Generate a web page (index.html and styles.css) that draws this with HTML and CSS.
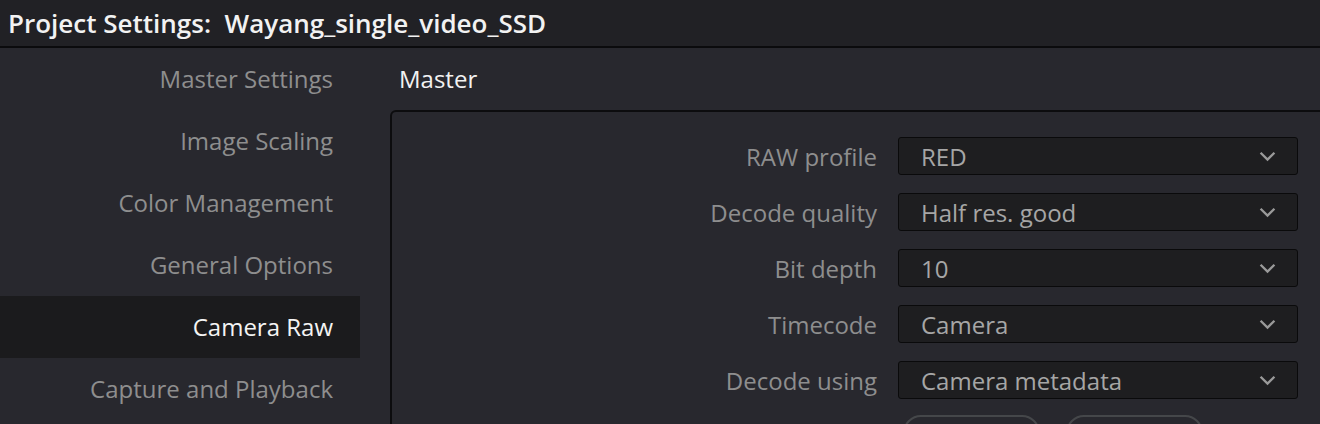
FILE: index.html
```html
<!DOCTYPE html>
<html lang="en">
<head>
    <meta charset="UTF-8" />
    <title>Project Settings</title>
    <link rel="stylesheet" href="styles.css">
</head>
<body>
    <div class="topbar">
        <span class="topbar-title">Project Settings:&nbsp; Wayang_single_video_SSD</span>
    </div>

    <div class="layout">
        <div class="sidebar">
            <div class="side-item">Master Settings</div>
            <div class="side-item">Image Scaling</div>
            <div class="side-item">Color Management</div>
            <div class="side-item">General Options</div>
            <div class="side-item active">Camera Raw</div>
            <div class="side-item">Capture and Playback</div>
        </div>

        <div class="main">
            <div class="main-title">Master</div>
            <div class="panel">
                <div class="row">
                    <span class="row-label">RAW profile</span>
                    <div class="select"><span>RED</span><svg class="chev" viewBox="0 0 16 10"><path d="M1.5 1.5 L8 8 L14.5 1.5" /></svg></div>
                </div>
                <div class="row">
                    <span class="row-label">Decode quality</span>
                    <div class="select"><span>Half res. good</span><svg class="chev" viewBox="0 0 16 10"><path d="M1.5 1.5 L8 8 L14.5 1.5" /></svg></div>
                </div>
                <div class="row">
                    <span class="row-label">Bit depth</span>
                    <div class="select"><span>10</span><svg class="chev" viewBox="0 0 16 10"><path d="M1.5 1.5 L8 8 L14.5 1.5" /></svg></div>
                </div>
                <div class="row">
                    <span class="row-label">Timecode</span>
                    <div class="select"><span>Camera</span><svg class="chev" viewBox="0 0 16 10"><path d="M1.5 1.5 L8 8 L14.5 1.5" /></svg></div>
                </div>
                <div class="row">
                    <span class="row-label">Decode using</span>
                    <div class="select"><span>Camera metadata</span><svg class="chev" viewBox="0 0 16 10"><path d="M1.5 1.5 L8 8 L14.5 1.5" /></svg></div>
                </div>
                <div class="buttons">
                    <button class="pill-btn" title="Apply"></button>
                    <button class="pill-btn" title="Reset"></button>
                </div>
            </div>
        </div>
    </div>
</body>
</html>
```

FILE: styles.css
```css
html, body {
    margin: 0;
    padding: 0;
    height: 100%;
    overflow: hidden;
}

body {
    background: #28282e;
    font-family: "Open Sans", "Noto Sans", sans-serif;
    color: #8e8e8e;
}

.topbar {
    height: 46px;
    display: flex;
    align-items: center;
    padding-left: 8px;
    background: #212125;
    border-bottom: 2px solid #0b0b0d;
}

.topbar-title {
    color: #f2f2f2;
    font-size: 26px;
    font-weight: 600;
    line-height: 1;
}

.layout {
    display: flex;
}

.sidebar {
    width: 360px;
    flex-shrink: 0;
}

.side-item {
    height: 62px;
    line-height: 62px;
    padding-right: 27px;
    text-align: right;
    font-size: 24px;
    color: #8e8e8e;
}

.side-item.active {
    background: #1b1b1d;
    color: #f4f4f4;
}

.main {
    flex: 1;
    padding-left: 30px;
}

.main-title {
    height: 62px;
    line-height: 62px;
    padding-left: 9px;
    font-size: 24px;
    color: #f2f2f2;
}

.panel {
    margin-right: -40px;
    border: 2px solid #0c0c0e;
    border-radius: 6px;
    padding-top: 25px;
}

.row {
    display: flex;
    align-items: center;
    height: 38px;
    margin-bottom: 18px;
}

.row-label {
    width: 485px;
    text-align: right;
    font-size: 24px;
    color: #8e8e8e;
}

.select {
    margin-left: 21px;
    width: 400px;
    height: 38px;
    display: flex;
    align-items: center;
    justify-content: space-between;
    padding: 0 21px 0 22px;
    box-sizing: border-box;
    background: #1e1e20;
    border: 1px solid #0a0a0b;
    border-radius: 3px;
    font-size: 24px;
    color: #a6a6a6;
}

.chev {
    width: 17px;
    height: 11px;
    fill: none;
    stroke: #9a9a9a;
    stroke-width: 2.2;
}

.buttons {
    display: flex;
    gap: 26px;
    margin-left: 511px;
    margin-top: -2px;
}

.pill-btn {
    width: 137px;
    height: 36px;
    border: 2px solid #45474a;
    border-radius: 18px;
    background: transparent;
}
```
